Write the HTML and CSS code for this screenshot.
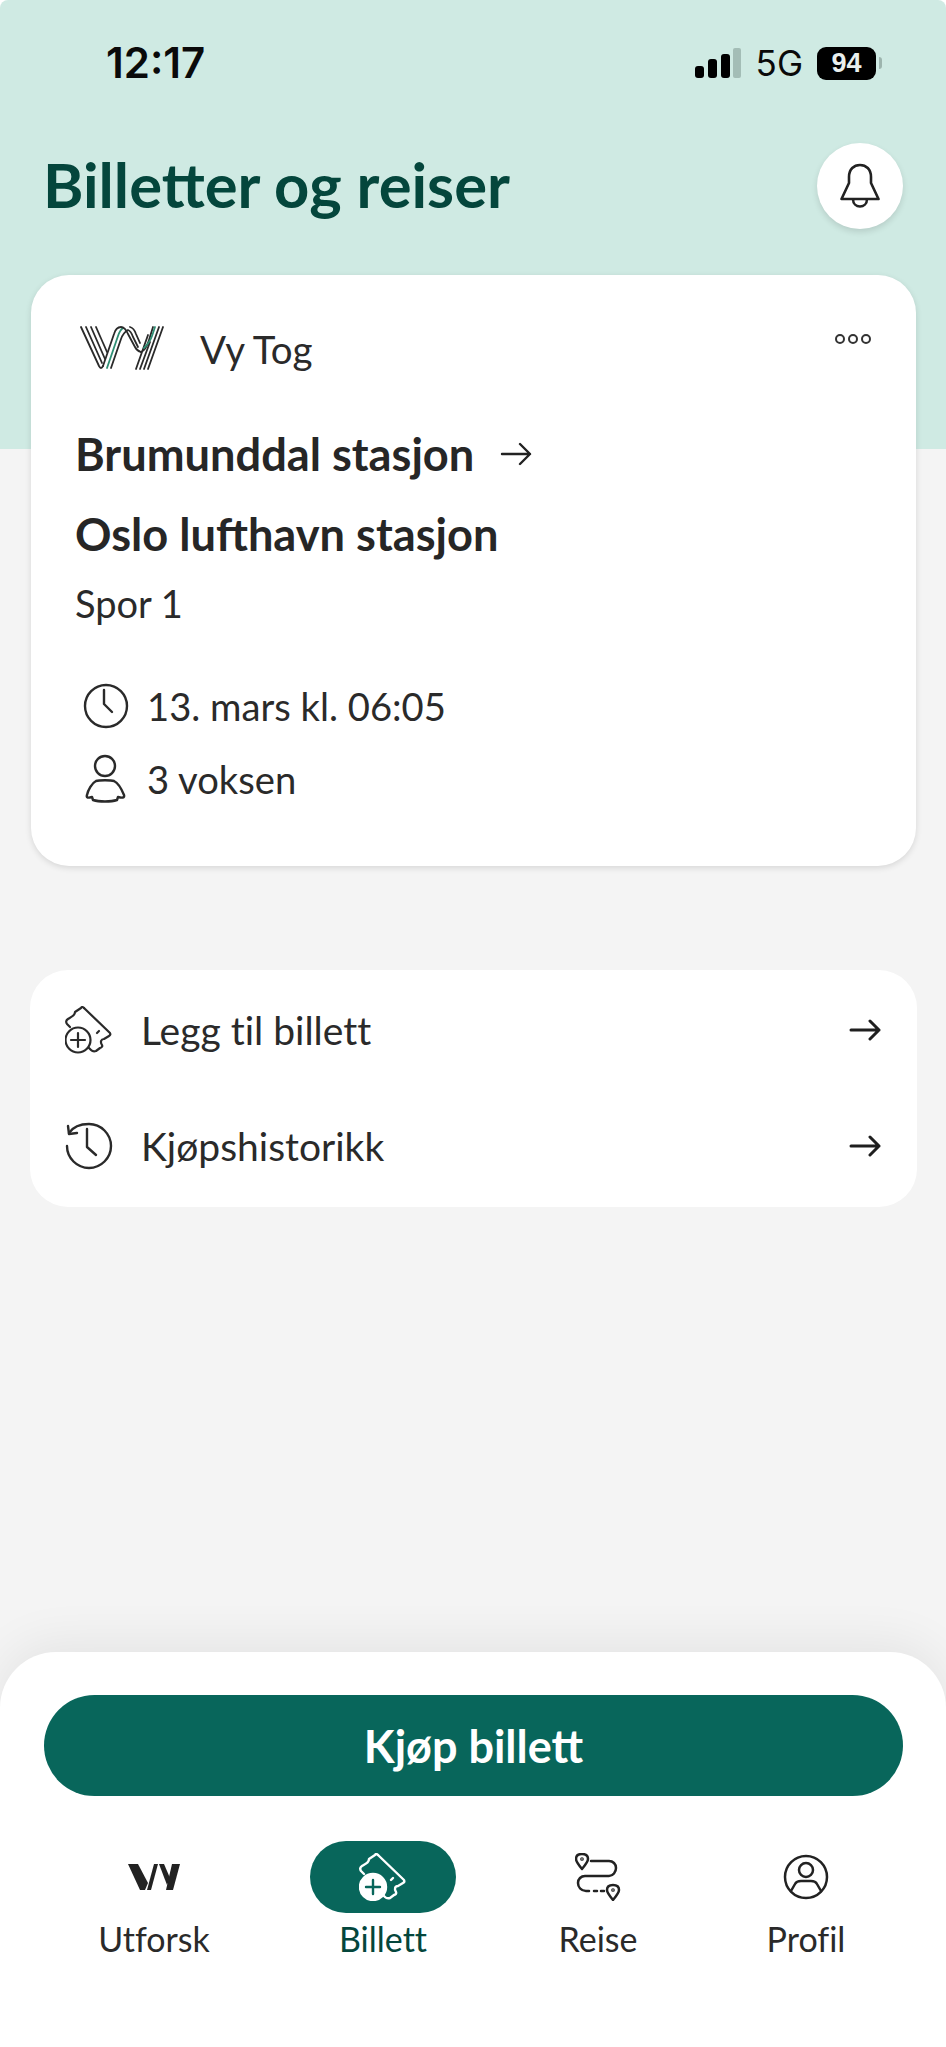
FILE: index.html
```html
<!DOCTYPE html>
<html lang="no">
<head>
<meta charset="utf-8">
<title>Billetter og reiser</title>
<link rel="stylesheet" href="styles.css">
</head>
<body>
<div class="page">
  <div class="status">
    <span class="time">12:17</span>
    <div class="status-right">
      <svg class="signal" viewBox="0 0 46 30" width="46" height="30"><rect x="0" y="18" width="9" height="12" rx="3" fill="#000"/><rect x="13" y="11" width="9" height="19" rx="3" fill="#000"/><rect x="26" y="6" width="9" height="24" rx="3" fill="#000"/><rect x="38" y="0" width="8" height="30" rx="2" fill="#a3bdb6"/></svg>
      <span class="net">5G</span>
      <span class="battery">94</span>
      <span class="nub"></span>
    </div>
  </div>

  <div class="title-row">
    <h1>Billetter og reiser</h1>
    <button class="bell" aria-label="Varsler">
      <svg viewBox="0 0 40 46" width="40" height="46" fill="none" stroke="#222" stroke-width="2.6" stroke-linejoin="round"><path d="M1.5 36 L9 20 V14 C9 6 14 2 20 2 C26 2 31 6 31 14 V20 L38.5 36 Z"/><path d="M13 36 C13 46 27 46 27 36"/></svg>
    </button>
  </div>

  <section class="card">
    <div class="card-head">
      <svg class="vy-logo" viewBox="0 0 84 44" width="84" height="44" fill="none" stroke-width="1.8" stroke-linecap="round">
        <g stroke="#2a2a2a"><path d="M1 1 L19 40 Q21 44 23 40"/><path d="M6 1 L22 37"/><path d="M11 1 L25 33"/><path d="M16 1 L27 26"/></g>
        <path d="M27 42 L38 10 Q40 4 43 2" stroke="#2f8f74"/>
        <g stroke="#2a2a2a"><path d="M23 40 L34 8 Q36 1 41 1 Q45 1 48 8 L55 21 Q57 25 61 26"/><path d="M31 42 L41 13 Q43 7 48 4 Q51 5 53 11 L58 21"/><path d="M50 1 Q54 2 56 8 L60 17"/><path d="M56 43 L68 9"/><path d="M60 43 L70 16"/><path d="M64 43 L79 1"/><path d="M68 43 L83 1"/><path d="M61 26 Q66 24 69 14 L73 1" /></g>
        <path d="M64 22 Q70 16 72 10 L75 1" stroke="#2f8f74"/>
      </svg>
      <span class="operator">Vy Tog</span>
      <svg class="more" viewBox="0 0 38 12" width="38" height="12" fill="none" stroke="#333" stroke-width="2"><circle cx="6" cy="6" r="4"/><circle cx="19" cy="6" r="4"/><circle cx="32" cy="6" r="4"/></svg>
    </div>
    <h2 class="stop first">Brumunddal stasjon
      <svg class="route-arrow" viewBox="0 0 32 24" width="32" height="24" fill="none" stroke="#222" stroke-width="2.4" stroke-linecap="round" stroke-linejoin="round"><path d="M2 12 H30 M20 2 L30 12 L20 22"/></svg>
    </h2>
    <h2 class="stop">Oslo lufthavn stasjon</h2>
    <p class="track">Spor 1</p>
    <div class="meta">
      <svg viewBox="0 0 46 46" width="46" height="46" fill="none" stroke="#2a2a2a" stroke-width="2.4" stroke-linecap="round" stroke-linejoin="round"><circle cx="23" cy="23" r="21"/><path d="M21 7 V21 L29 29"/></svg>
      <span>13. mars kl. 06:05</span>
    </div>
    <div class="meta">
      <svg viewBox="0 0 46 50" width="46" height="50" fill="none" stroke="#2a2a2a" stroke-width="2.4" stroke-linecap="round" stroke-linejoin="round"><circle cx="22" cy="12" r="10"/><path d="M13 27 C16 26 28 26 31 27 C35 29 39 36 41 41 C42 44 39 44 35 43 L34 46 C28 48 16 48 10 46 L9 43 C5 44 3 44 4 41 C5 36 9 29 13 27 Z"/></svg>
      <span>3 voksen</span>
    </div>
  </section>

  <nav class="links">
    <a class="link">
      <svg class="link-icon" viewBox="0 0 48 48" width="48" height="48" fill="none" stroke="#2a2a2a" stroke-width="2.2" stroke-linecap="round" stroke-linejoin="round"><path d="M19 2 L45 27 Q46 29 44 30 L39 33 C36 33 35 36 37 39 Q38 41 35 42 L31 45 Q28 46 26 44 L24 42"/><path d="M19 2 Q17 0 16 2 L10 6 C10 9 8 10 3 13 Q0 15 2 18 L5 21"/><path d="M32 27 L34 25"/><circle cx="13" cy="34" r="12.5"/><path d="M13 27 V41 M6 34 H20"/></svg>
      <span>Legg til billett</span>
      <svg class="link-arrow" viewBox="0 0 32 24" width="32" height="24" fill="none" stroke="#1f1f1f" stroke-width="3" stroke-linecap="round" stroke-linejoin="round"><path d="M2 12 H30 M21 3 L30 12 L21 21"/></svg>
    </a>
    <a class="link">
      <svg class="link-icon" viewBox="0 0 48 48" width="48" height="48" fill="none" stroke="#2a2a2a" stroke-width="2.4" stroke-linecap="round" stroke-linejoin="round"><path d="M4 11 C8 5 15 2 24 2 C36 2 46 12 46 24 C46 36 36 46 24 46 C12 46 2 36 2 24"/><path d="M3 4 L4 12 L12 11"/><path d="M22 7 V25 L31 33"/></svg>
      <span>Kjøpshistorikk</span>
      <svg class="link-arrow" viewBox="0 0 32 24" width="32" height="24" fill="none" stroke="#1f1f1f" stroke-width="3" stroke-linecap="round" stroke-linejoin="round"><path d="M2 12 H30 M21 3 L30 12 L21 21"/></svg>
    </a>
  </nav>

  <div class="sheet">
    <button class="buy">Kjøp billett</button>
    <div class="tabs">
      <div class="tab">
        <div class="tab-icon">
          <svg viewBox="0 0 52 28" width="52" height="28" fill="#222"><path d="M0 1 H10 L20 20 L17 27 H12 Z"/><path d="M19 27 L26 1 H30 L23 27 Z"/><path d="M31 1 H36 L42 15 L39 22 Z"/><path d="M38 27 L44 1 H52 L45 27 Z"/></svg>
        </div>
        <span>Utforsk</span>
      </div>
      <div class="tab active">
        <div class="tab-icon">
          <svg viewBox="0 0 48 48" width="48" height="48" fill="none" stroke="#fff" stroke-width="2.4" stroke-linecap="round" stroke-linejoin="round"><path d="M19 2 L45 27 Q46 29 44 30 L39 33 C36 33 35 36 37 39 Q38 41 35 42 L31 45 Q28 46 26 44 L24 42"/><path d="M19 2 Q17 0 16 2 L10 6 C10 9 8 10 3 13 Q0 15 2 18 L5 21"/><path d="M32 27 L34 25"/><circle cx="14" cy="34" r="13" fill="#fff"/><path d="M14 27 V41 M7 34 H21" stroke="#08665b"/></svg>
        </div>
        <span>Billett</span>
      </div>
      <div class="tab">
        <div class="tab-icon">
          <svg viewBox="0 0 46 48" width="46" height="48" fill="none" stroke="#222" stroke-width="2.5" stroke-linecap="round" stroke-linejoin="round"><path d="M7 16 C2 10 1 8 1 6 C1 3 3 1 7 1 C11 1 13 3 13 6 C13 8 12 10 7 16 Z"/><circle cx="7" cy="6" r="0.6"/><path d="M16 8 H34 C38 8 41 11 41 15 C41 19 38 23 34 23 H10 C6 23 3 26 3 30 C3 34 6 38 11 38 H14"/><path d="M19 38 H22 M26 38 H29"/><path d="M38 47 C33 41 32 39 32 37 C32 34 34 32 38 32 C42 32 44 34 44 37 C44 39 43 41 38 47 Z"/><circle cx="38" cy="37" r="0.6"/></svg>
        </div>
        <span>Reise</span>
      </div>
      <div class="tab">
        <div class="tab-icon">
          <svg viewBox="0 0 46 46" width="46" height="46" fill="none" stroke="#222" stroke-width="2.5" stroke-linecap="round" stroke-linejoin="round"><circle cx="23" cy="23" r="21"/><circle cx="23" cy="16" r="7"/><path d="M8 37 L12 30 C13 28 15 27 18 27 H28 C31 27 33 28 34 30 L38 37"/></svg>
        </div>
        <span>Profil</span>
      </div>
    </div>
  </div>
</div>
</body>
</html>
```
FILE: styles.css
```css
* { box-sizing: border-box; }
html, body { margin: 0; padding: 0; }
body { font-family: "Lato", "Noto Sans", sans-serif; color: #2a2a2a; font-variant-ligatures: none; }
.page {
  width: 946px;
  height: 2047px;
  display: flex;
  flex-direction: column;
  background: linear-gradient(#cfeae3 449px, #f4f4f4 449px);
  border-radius: 8px 8px 0 0;
  overflow: hidden;
}
.status {
  display: flex;
  justify-content: space-between;
  align-items: center;
  height: 48px;
  margin-top: 39px;
  padding: 0 64px 0 106px;
}
.time { font: 600 42px/48px "Inter", "Liberation Sans", sans-serif; color: #0a0a0a; }
.status-right { display: flex; align-items: center; }
.signal { margin-right: 15px; margin-left: -2px; }
.net { font: 400 35px/40px "Inter", "Liberation Sans", sans-serif; color: #0a0a0a; margin-right: 14px; }
.battery {
  width: 59px;
  height: 33px;
  border-radius: 9px;
  background: #000;
  color: #e9efed;
  font: 700 27px/33px "Liberation Sans", sans-serif;
  text-align: center;
}
.nub { width: 3px; height: 12px; margin-left: 3px; border-radius: 0 3px 3px 0; background: #9db5ae; }
.title-row {
  display: flex;
  justify-content: space-between;
  align-items: center;
  height: 86px;
  margin-top: 56px;
  padding: 0 43px 0 43px;
}
h1 { margin: 0 0 4px; font: 700 61.5px/70px "Lato", "Noto Sans", sans-serif; color: #04463c; }
.bell {
  width: 86px;
  height: 86px;
  border: 0;
  padding: 0;
  border-radius: 50%;
  background: #fff;
  box-shadow: 0 3px 6px rgba(0,0,0,.12);
  display: flex;
  align-items: center;
  justify-content: center;
}
.card {
  margin: 46px 30px 0 31px;
  height: 591px;
  padding: 45px 35px 0 44px;
  background: #fff;
  border-radius: 38px;
  box-shadow: 0 2px 6px rgba(0,0,0,.12);
}
.card-head { display: flex; align-items: center; height: 56px; }
.vy-logo { margin-left: 5px; }
.operator { margin: 2px 0 0 36px; font-size: 38.5px; line-height: 56px; }
.more { margin: -18px 9px 0 auto; }
.stop {
  margin: 0;
  font: 700 45.2px/56px "Lato", sans-serif;
  color: #262626;
  display: flex;
  align-items: center;
  gap: 26px;
}
.stop.first { margin-top: 50px; }
.stop + .stop { margin-top: 24px; }
.track { margin: 16px 0 0; font-size: 38px; line-height: 50px; }
.meta { display: flex; align-items: center; gap: 18px; height: 50px; margin-top: 23px; font-size: 38.2px; padding-left: 8px; }
.track + .meta { margin-top: 53px; }
.meta span { line-height: 50px; }
.links {
  margin: 104px 29px 0 30px;
  height: 237px;
  background: #fff;
  border-radius: 38px;
  padding: 2px 36px 0 35px;
}
.link { display: flex; align-items: center; height: 116px; font-size: 39px; }
.link-icon { flex: none; }
.link span { margin-left: 28px; }
.link-arrow { margin-left: auto; }
.sheet {
  margin-top: auto;
  height: 395px;
  background: #fff;
  border-radius: 56px 56px 0 0;
  box-shadow: 0 -8px 50px rgba(0,0,0,.07);
  padding: 43px 43px 0 44px;
}
.buy {
  display: block;
  width: 100%;
  height: 101px;
  border: 0;
  border-radius: 51px;
  background: #08665b;
  color: #fff;
  font: 700 45px/101px "Lato", sans-serif;
}
.tabs { display: grid; grid-template-columns: 308px 150px 280px 136px; margin: 45px 0 0 -44px; }
.tab {
  display: flex;
  flex-direction: column;
  align-items: center;
  font-size: 34px;
  line-height: 40px;
}
.tab-icon {
  width: 146px;
  height: 72px;
  border-radius: 36px;
  display: flex;
  align-items: center;
  justify-content: center;
  margin-bottom: 6px;
}
.tab.active .tab-icon { background: #08665b; }
.tab.active span { color: #04463c; }
```
